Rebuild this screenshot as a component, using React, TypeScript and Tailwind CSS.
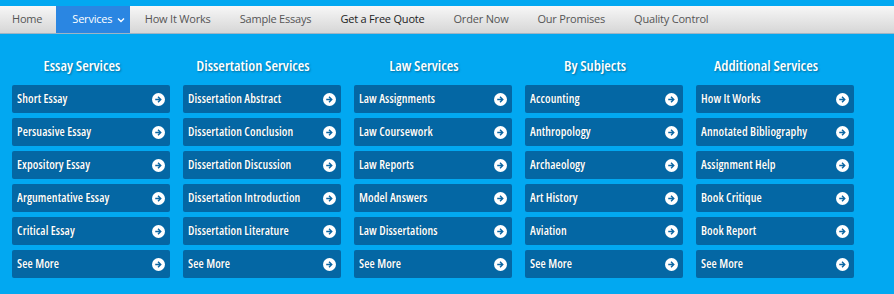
import React from "react";

const columns: { title: string; items: string[] }[] = [
  { title: "Essay Services", items: ["Short Essay", "Persuasive Essay", "Expository Essay", "Argumentative Essay", "Critical Essay", "See More"] },
  { title: "Dissertation Services", items: ["Dissertation Abstract", "Dissertation Conclusion", "Dissertation Discussion", "Dissertation Introduction", "Dissertation Literature", "See More"] },
  { title: "Law Services", items: ["Law Assignments", "Law Coursework", "Law Reports", "Model Answers", "Law Dissertations", "See More"] },
  { title: "By Subjects", items: ["Accounting", "Anthropology", "Archaeology", "Art History", "Aviation", "See More"] },
  { title: "Additional Services", items: ["How It Works", "Annotated Bibliography", "Assignment Help", "Book Critique", "Book Report", "See More"] },
];

const navItems = ["How It Works", "Sample Essays", "Get a Free Quote", "Order Now", "Our Promises", "Quality Control"];

function ArrowCircle() {
  return (
    <svg width="13" height="13" viewBox="0 0 16 16" className="shrink-0">
      <circle cx="8" cy="8" r="8" fill="#ffffff" />
      <path d="M4 7h4.6L6.8 5.2 8 4l4 4-4 4-1.2-1.2L8.6 9H4z" fill="#0a66a3" />
    </svg>
  );
}

export default function App() {
  return (
    <div
      className="w-[894px] h-[294px] bg-[#02a8f1] overflow-hidden"
      style={{ fontFamily: '"Open Sans", "Noto Sans", sans-serif' }}
    >
      <div className="h-[6px]" />
      <nav className="h-[28px] flex items-stretch bg-gradient-to-b from-[#f7f7f7] to-[#d6d6d6] border-b border-[#9fb4c4] text-[11px] tracking-[-0.2px] text-[#555]">
        <div className="pl-[12px] pr-[14px] flex items-center">Home</div>
        <div className="w-[74px] bg-[#2a86e2] text-white flex items-center pl-[16px] gap-[5px]">
          <span>Services</span>
          <svg width="8" height="6" viewBox="0 0 8 6"><path d="M1 1.5l3 3 3-3" stroke="#fff" strokeWidth="1.4" fill="none" /></svg>
        </div>
        {navItems.map((n) => (
          <div key={n} className={`px-[14.5px] flex items-center ${n === "Get a Free Quote" ? "text-[#222]" : ""}`}>
            {n}
          </div>
        ))}
      </nav>
      <div className="flex gap-[13px] pl-[12px] pt-[21px]">
        {columns.map((c) => (
          <div key={c.title} className="w-[158px] flex flex-col">
            <h3
              className="text-center text-white text-[15px] font-semibold leading-[20px] h-[20px] mb-[10px] pr-[18px] font-stretch-condensed"
              style={{ textShadow: "1px 1px 2px rgba(0,0,0,0.35)" }}
            >
              {c.title}
            </h3>
            <div className="flex flex-col gap-[5px]">
              {c.items.map((it) => (
                <div
                  key={it}
                  className="h-[28px] bg-[#0467a4] rounded-[2px] flex items-center justify-between pl-[5px] pr-[5px] text-white text-[12px] tracking-[0.1px] font-semibold font-stretch-condensed"
                  style={{ textShadow: "0 0 1px rgba(0,0,0,0.3)" }}
                >
                  <span>{it}</span>
                  <ArrowCircle />
                </div>
              ))}
            </div>
          </div>
        ))}
      </div>
    </div>
  );
}
